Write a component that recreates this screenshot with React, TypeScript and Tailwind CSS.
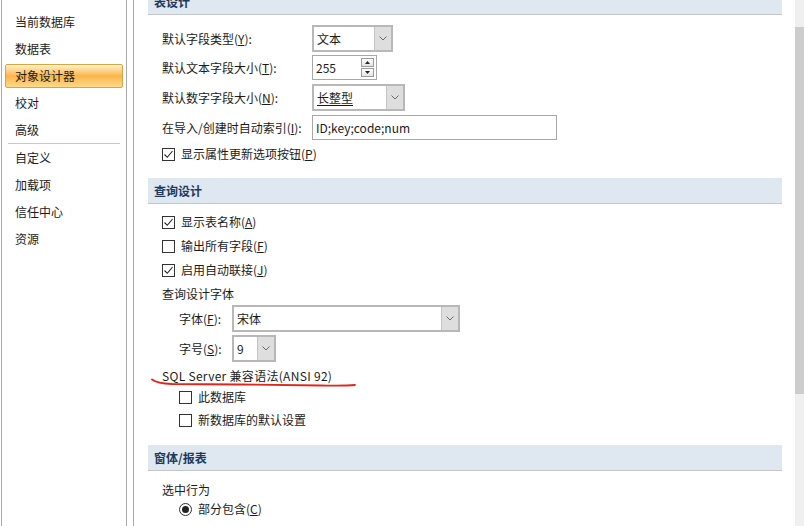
import type { ReactNode } from "react";

// ─── Constants ────────────────────────────────────────────────────────────────

const FONT = { fontFamily: '"Noto Sans CJK SC", "Noto Sans", sans-serif' };

const NAV_TOP = ["当前数据库", "数据表", "对象设计器", "校对", "高级"];
const NAV_BOTTOM = ["自定义", "加载项", "信任中心", "资源"];
const ACTIVE = "对象设计器";

// ─── Small controls ───────────────────────────────────────────────────────────

function Chevron() {
  return (
    <svg width="8" height="5" viewBox="0 0 8 5" fill="none">
      <path d="M0.5 0.5 L4 4 L7.5 0.5" stroke="#6b6b6b" strokeWidth="1" />
    </svg>
  );
}

function Dropdown({ width, text, underline }: { width: string; text: string; underline?: boolean }) {
  return (
    <div className={`flex h-[27px] ${width} border-2 border-[#b8b8b8] bg-white`}>
      <span className={`flex flex-1 items-center pl-[3px] ${underline ? "underline underline-offset-2" : ""}`}>
        {text}
      </span>
      <span className="flex w-[17px] items-center justify-center border-l border-[#c4c4c4] bg-[#dedede]">
        <Chevron />
      </span>
    </div>
  );
}

function SpinButton({ up }: { up?: boolean }) {
  return (
    <span className="flex h-[9px] w-[13px] items-center justify-center border border-[#9c9c9c] bg-gradient-to-b from-white to-[#e4e4e4]">
      <svg width="5" height="3" viewBox="0 0 5 3">
        <path d={up ? "M0 3 L2.5 0 L5 3 Z" : "M0 0 L2.5 3 L5 0 Z"} fill="#222" />
      </svg>
    </span>
  );
}

function Checkbox({ checked }: { checked?: boolean }) {
  return (
    <span className="flex size-[13px] shrink-0 items-center justify-center border border-[#333] bg-white">
      {checked && (
        <svg width="11" height="11" viewBox="0 0 11 11" fill="none">
          <path d="M1.5 5.5 L4.3 8.3 L9.5 2" stroke="#222" strokeWidth="1.1" />
        </svg>
      )}
    </span>
  );
}

function CheckRow({ checked, children, className = "" }: { checked?: boolean; children: ReactNode; className?: string }) {
  return (
    <div className={`flex items-center gap-[6px] ${className}`}>
      <Checkbox checked={checked} />
      <span>{children}</span>
    </div>
  );
}

function SectionHeader({ title }: { title: string }) {
  return (
    <div className="flex h-[26px] items-center border-b border-[#c3c7cc] bg-[#dfe8f0] pl-[6px] text-[12px] font-bold text-[#1d3a5e]">
      {title}
    </div>
  );
}

// ─── Page ─────────────────────────────────────────────────────────────────────

export default function App() {
  return (
    <div
      style={FONT}
      className="relative flex h-[526px] w-[804px] overflow-hidden bg-white text-[12px] text-[#1b1b1b]"
    >
      {/* Left nav */}
      <div className="ml-px h-full w-[126px] border-x border-[#a9a9a9] pt-[8px]">
        {NAV_TOP.map((item) => (
          <div key={item} className="flex h-[27px] items-center px-[3px]">
            {item === ACTIVE ? (
              <div className="flex h-[24px] w-full items-center rounded-[2px] border border-[#d9a441] bg-gradient-to-b from-[#fff1c4] via-[#fbb548] to-[#fdd98a] pl-[9px] shadow-[inset_0_1px_0_#fff6d8]">
                {item}
              </div>
            ) : (
              <span className="pl-[10px]">{item}</span>
            )}
          </div>
        ))}
        <div className="mx-[6px] h-px bg-[#c9c9c9]" />
        {NAV_BOTTOM.map((item) => (
          <div key={item} className="flex h-[27px] items-center pl-[13px]">
            {item}
          </div>
        ))}
      </div>

      {/* Main panel */}
      <div className="ml-[6px] h-full flex-1 border-l border-[#a9a9a9] pl-[14px] pr-[13px]">
        <div className="-mt-[11px]">
          <SectionHeader title="表设计" />

          <div className="pl-[14px] pt-[10px]">
            <div className="flex h-[27px] items-center">
              <span className="w-[150px]">默认字段类型(<u>Y</u>):</span>
              <Dropdown width="w-[81px]" text="文本" />
            </div>
            <div className="mt-[3px] flex h-[25px] items-center">
              <span className="w-[150px]">默认文本字段大小(<u>T</u>):</span>
              <div className="flex h-[25px] w-[65px] items-center border border-[#a8a8a8] bg-white">
                <span className="flex-1 pl-[3px]">255</span>
                <span className="mr-[2px] flex flex-col gap-px">
                  <SpinButton up />
                  <SpinButton />
                </span>
              </div>
            </div>
            <div className="mt-[4px] flex h-[27px] items-center">
              <span className="w-[150px]">默认数字字段大小(<u>N</u>):</span>
              <Dropdown width="w-[93px]" text="长整型" underline />
            </div>
            <div className="mt-[4px] flex h-[25px] items-center">
              <span className="w-[150px]">在导入/创建时自动索引(<u>I</u>):</span>
              <div className="flex h-[25px] w-[245px] items-center border border-[#a8a8a8] bg-white pl-[3px]">
                ID;key;code;num
              </div>
            </div>
            <CheckRow checked className="mt-[2px] h-[24px]">
              显示属性更新选项按钮(<u>P</u>)
            </CheckRow>
          </div>

          <div className="mt-[12px]">
            <SectionHeader title="查询设计" />
          </div>

          <div className="pl-[14px] pt-[6px]">
            <CheckRow checked className="h-[24px]">
              显示表名称(<u>A</u>)
            </CheckRow>
            <CheckRow className="h-[24px]">
              输出所有字段(<u>F</u>)
            </CheckRow>
            <CheckRow checked className="h-[24px]">
              启用自动联接(<u>J</u>)
            </CheckRow>
            <div className="flex h-[24px] items-center">查询设计字体</div>

            <div className="-mt-px flex h-[27px] items-center pl-[17px]">
              <span className="w-[53px]">字体(<u>F</u>):</span>
              <Dropdown width="w-[228px]" text="宋体" />
            </div>
            <div className="mt-[3px] flex h-[27px] items-center pl-[17px]">
              <span className="w-[53px]">字号(<u>S</u>):</span>
              <Dropdown width="w-[44px]" text="9" />
            </div>

            <div className="mt-[4px] flex h-[20px] items-center tracking-[0.3px]">SQL Server 兼容语法(ANSI 92)</div>
            <CheckRow className="h-[22px] pl-[17px]">此数据库</CheckRow>
            <CheckRow className="h-[24px] pl-[17px]">新数据库的默认设置</CheckRow>
          </div>

          <div className="mt-[13px]">
            <SectionHeader title="窗体/报表" />
          </div>

          <div className="pl-[14px] pt-[9px]">
            <div className="flex h-[20px] items-center">选中行为</div>
            <div className="flex h-[18px] items-center gap-[6px] pl-[17px]">
              <span className="flex size-[13px] items-center justify-center rounded-full border border-[#333] bg-white">
                <span className="size-[7px] rounded-full bg-[#222]" />
              </span>
              <span>
                部分包含(<u>C</u>)
              </span>
            </div>
          </div>
        </div>
      </div>

      {/* Scrollbar */}
      <div className="flex h-full w-[9px] flex-col bg-[#f0f0f0]">
        <div className="mt-[27px] h-[367px] bg-[#cdcdcd]" />
      </div>

      {/* Hand-drawn red annotation */}
      <svg className="pointer-events-none absolute left-0 top-0" width="804" height="526" viewBox="0 0 804 526" fill="none">
        <path
          d="M152 379.5 Q157 383.5 172 384 L240 384.5 L320 385.5 Q345 386 355 385"
          stroke="#e1251b"
          strokeWidth="1.8"
          strokeLinecap="round"
        />
      </svg>
    </div>
  );
}
